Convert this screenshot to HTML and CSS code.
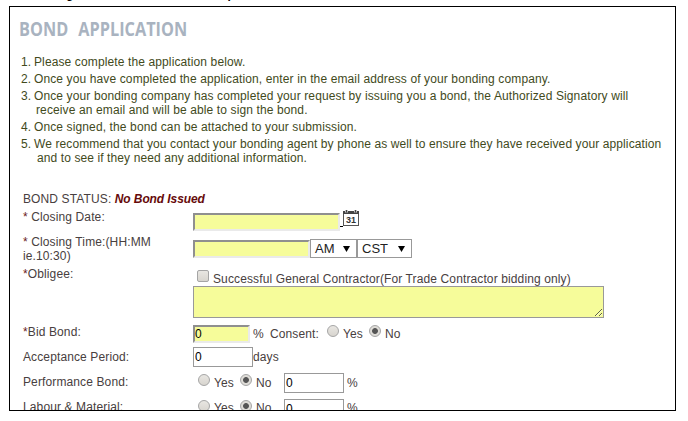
FILE: index.html
```html
<!DOCTYPE html>
<html>

<head>
    <meta charset="utf-8">
    <title>Bond Application</title>
    <link rel="stylesheet" href="styles.css">
</head>

<body>
    <div class="intro"><span>g</span><span>p</span></div>

    <div class="panel">
        <h1>BOND APPLICATION</h1>

        <ol class="steps">
            <li><span class="num">1.</span><span>Please complete the application below.</span></li>
            <li><span class="num">2.</span><span>Once you have completed the application, enter in the email address of your bonding company.</span></li>
            <li><span class="num">3.</span><span>Once your bonding company has completed your request by issuing you a bond, the Authorized Signatory will<br><span class="more">receive an email and will be able to sign the bond.</span></span></li>
            <li><span class="num">4.</span><span>Once signed, the bond can be attached to your submission.</span></li>
            <li><span class="num">5.</span><span class="long">We recommend that you contact your bonding agent by phone as well to ensure they have received your application<br><span class="more last">and to see if they need any additional information.</span></span></li>
        </ol>

        <form>
            <div class="row status">
                <div class="label">BOND STATUS: <em>No Bond Issued</em></div>
            </div>

            <div class="row date">
                <div class="label"><i>*</i> Closing Date:</div>
                <input type="text" class="required">
                <span class="underline"></span>
                <svg class="calendar" width="16" height="16" viewBox="0 0 16 16">
                    <rect x="0.5" y="2.5" width="15" height="13" fill="#fff" stroke="#555"/>
                    <rect x="0" y="1" width="16" height="3" fill="#444"/>
                    <path d="M3.5 0v2.5M12.5 0v2.5" stroke="#ddd" stroke-width="3"/>
                    <path d="M3.5 0v2.5M12.5 0v2.5" stroke="#444" stroke-width="1.4"/>
                    <text x="8" y="13.4" text-anchor="middle">31</text>
                </svg>
            </div>

            <div class="row time">
                <div class="label"><i>*</i> Closing Time:(HH:MM<br>ie.10:30)</div>
                <input type="text" class="required">
                <div class="select am">AM<svg width="7" height="6"><path d="M0 0h7L3.5 6z"/></svg></div>
                <div class="select zone">CST<svg width="7" height="6"><path d="M0 0h7L3.5 6z"/></svg></div>
            </div>

            <div class="row obligee">
                <div class="label"><i>*</i>Obligee:</div>
                <div>
                    <div class="check-line">
                        <input type="checkbox">
                        <span>Successful General Contractor(For Trade Contractor bidding only)</span>
                    </div>
                    <textarea></textarea>
                </div>
            </div>

            <div class="row bid">
                <div class="label"><i>*</i>Bid Bond:</div>
                <input type="text" class="required" value="0">
                <span class="percent">%</span>
                <span class="consent">Consent:</span>
                <input type="radio" name="consent">
                <span class="yes">Yes</span>
                <input type="radio" name="consent" checked>
                <span class="no">No</span>
            </div>

            <div class="row period">
                <div class="label">Acceptance Period:</div>
                <input type="text" value="0">
                <span>days</span>
            </div>

            <div class="row bond">
                <div class="label">Performance Bond:</div>
                <input type="radio" name="performance">
                <span class="yes">Yes</span>
                <input type="radio" name="performance" checked>
                <span class="no">No</span>
                <input type="text" value="0">
                <span class="percent">%</span>
            </div>

            <div class="row bond labour">
                <div class="label">Labour &amp; Material:</div>
                <input type="radio" name="labour">
                <span class="yes">Yes</span>
                <input type="radio" name="labour" checked>
                <span class="no">No</span>
                <input type="text" value="0">
                <span class="percent">%</span>
            </div>
        </form>
    </div>
</body>

</html>
```

FILE: styles.css
```css
* {
    box-sizing: border-box;
}

body {
    margin: 0;
    height: 421px;
    overflow: hidden;
    background-color: #fff;
    font: 12px/14px "Liberation Sans", Arial, sans-serif;
    letter-spacing: 0.12px;
    color: #484040;
}

.intro {
    display: flex;
    gap: 154px;
    height: 6px;
    padding-left: 66px;
    overflow: hidden;
    font-weight: bold;
    color: #000;
    line-height: 0;
}

.intro span {
    height: 0;
    margin-top: -6px;
}

.panel {
    width: 667px;
    height: 405px;
    margin-left: 9px;
    border: 1px solid #000;
    overflow: hidden;
}

h1 {
    margin: 10px 0 0 9px;
    height: 38px;
    font: 700 19.5px/24px "Open Sans", sans-serif;
    letter-spacing: 0;
    word-spacing: 7px;
    color: #a9b3c0;
    white-space: nowrap;
    transform: scaleX(0.835);
    transform-origin: left;
}

.steps {
    margin: 0 0 0 11px;
    padding: 0;
    height: 134px;
    list-style: none;
    color: #424a1c;
    white-space: nowrap;
}

.steps li {
    display: flex;
    margin-bottom: 3px;
}

.num {
    flex: none;
    width: 13px;
}

.long {
    letter-spacing: 0.1px;
}

.more {
    margin-left: 2px;
}

.last {
    margin-left: 3px;
}

.row {
    display: flex;
    align-items: flex-start;
    padding-left: 13px;
    white-space: nowrap;
}

.label {
    flex: none;
    width: 170px;
    padding-top: 3px;
}

.label i {
    font-style: normal;
    color: #6b2020;
}

.label em {
    font-weight: bold;
    color: #660a0a;
    letter-spacing: -0.1px;
}

input,
textarea {
    flex: none;
    margin: 0;
    font: 12px/14px "Liberation Sans", Arial, sans-serif;
    color: #000;
}

input[type="text"] {
    width: 60px;
    height: 20px;
    padding: 0 1px;
    border: 1px solid #999;
    background-color: #fff;
}

input[type="text"].required {
    height: 18px;
    padding: 0;
    border: 2px solid;
    border-color: #8f8f8f #eaeaea #eaeaea #8f8f8f;
    background-color: #f6fc9a;
}

input[type="radio"],
input[type="checkbox"] {
    appearance: none;
    width: 12px;
    height: 12px;
    border: 1px solid #a5a5a5;
    border-radius: 2px;
    background: linear-gradient(#e8e6e2, #d8d5cf);
}

input[type="radio"] {
    border-radius: 50%;
}

input[type="radio"]:checked {
    background: radial-gradient(circle, #555 0 2.5px, #dedcd7 3.3px);
}

.status {
    height: 18px;
}

.date {
    height: 25px;
}

.date input[type="text"] {
    width: 147px;
    margin-top: 6px;
}

.underline {
    width: 3px;
    height: 1px;
    margin-top: 19px;
    background-color: #000;
}

.calendar {
    margin-top: 3px;
}

.calendar text {
    font: bold 9px "Liberation Sans", Arial, sans-serif;
    letter-spacing: 0;
    fill: #333;
}

.time {
    height: 32px;
}

.time input[type="text"] {
    width: 117px;
    margin-top: 8px;
}

.select {
    display: flex;
    justify-content: space-between;
    align-items: center;
    height: 19px;
    margin-top: 7px;
    padding: 0 6px 0 4px;
    border: 1px solid #999;
    font-size: 13px;
    letter-spacing: 0;
    color: #222;
}

.am {
    width: 47px;
}

.zone {
    width: 55px;
}

.obligee {
    height: 58px;
}

.check-line {
    display: flex;
    height: 22px;
    padding-left: 4px;
}

.check-line input {
    margin: 6px 4px 0 0;
}

.check-line span {
    padding-top: 8px;
}

textarea {
    display: block;
    width: 411px;
    height: 32px;
    border: 1px solid #999;
    background-color: #f6fc9a;
    resize: both;
}

.bid {
    height: 25px;
}

.bid input[type="text"] {
    width: 57px;
    margin-top: 3px;
}

.bid span {
    padding-top: 5px;
}

.bid .percent {
    width: 20px;
    padding-left: 3px;
}

.consent {
    width: 57px;
}

.bid input[type="radio"] {
    margin-top: 3px;
}

.yes,
.no {
    margin-left: 4px;
}

.yes {
    width: 26px;
}

.period {
    height: 25px;
}

.period span {
    padding-top: 3px;
}

.bond {
    height: 26px;
}

.bond input[type="radio"] {
    margin-top: 2px;
}

.bond input[type="radio"]:nth-child(2) {
    margin-left: 5px;
}

.bond span {
    padding-top: 4px;
}

.bond input[type="text"] {
    margin-top: 1px;
}

.bond .no {
    width: 28px;
}

.bond .percent {
    padding-left: 3px;
}

.labour .label {
    padding-top: 2px;
}

.labour span {
    padding-top: 3px;
}
```
